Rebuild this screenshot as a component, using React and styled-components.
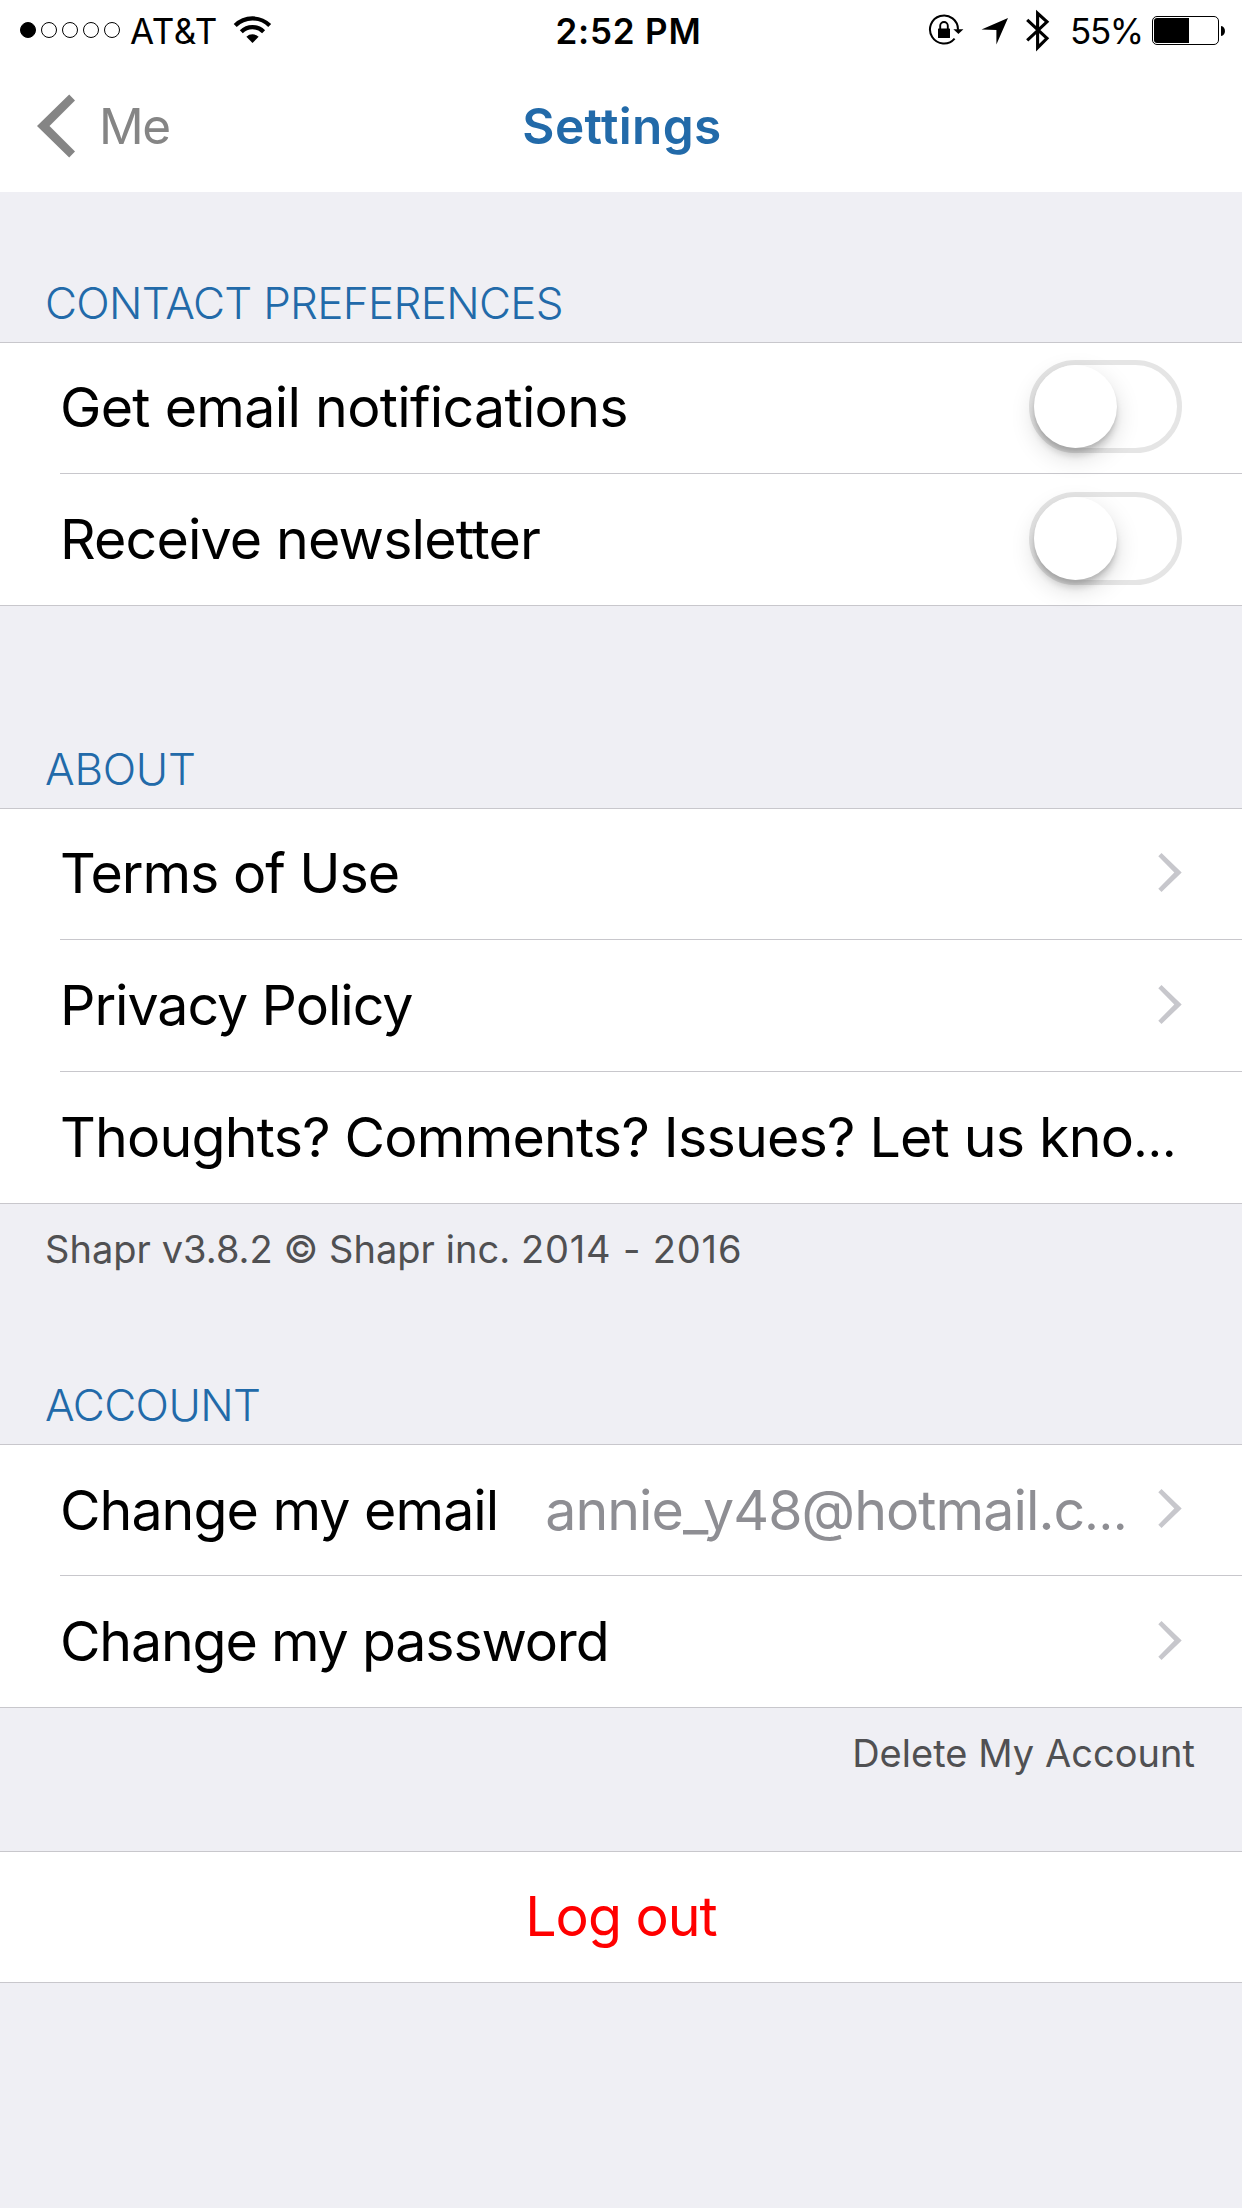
import React from "react";
import styled, { createGlobalStyle } from "styled-components";

const GlobalStyle = createGlobalStyle`
  *, *::before, *::after { box-sizing: border-box; }
  body {
    margin: 0;
    background: #efeff4;
    color: #000;
    font-family: Inter, "Liberation Sans", sans-serif;
  }
`;

const Screen = styled.main`
  display: flex;
  flex-direction: column;
  width: 1242px;
  min-height: 2208px;
  background: #efeff4;
`;

const TopBar = styled.header`
  height: 192px;
  background: #fff;
`;

const StatusBar = styled.div`
  display: grid;
  grid-template-columns: 1fr auto 1fr;
  height: 62px;
  font-size: 35px;
  line-height: 62px;
  white-space: nowrap;
`;

const StatusLeft = styled.div`
  display: flex;
  padding-left: 20px;
`;

const StatusRight = styled.div`
  display: flex;
  justify-content: flex-end;
  padding-right: 16px;
`;

const SignalDots = styled.div`
  display: flex;
  align-items: center;
  gap: 5px;
  height: 60px;
  margin-right: 10px;
`;

const Dot = styled.span`
  width: 16px;
  height: 16px;
  border: 1px solid #000;
  border-radius: 50%;
  background: ${(p) => (p.$filled ? "#000" : "transparent")};
`;

const Carrier = styled.span`
  width: 100px;
  letter-spacing: 0.52px;
`;

const Clock = styled.time`
  padding-left: 15px;
  font-weight: 600;
  letter-spacing: 0.8px;
`;

const BatteryLevel = styled.span`
  width: 82px;
  letter-spacing: -1.4px;
`;

const Glyph = styled.svg`
  display: block;
  flex: none;
`;

const NavBar = styled.nav`
  display: grid;
  grid-template-columns: 1fr auto 1fr;
  height: 128px;
  line-height: 128px;
  font-size: 49.5px;
`;

const BackLink = styled.a`
  display: flex;
  align-items: center;
  gap: 23px;
  padding-left: 37px;
  color: #858585;
  letter-spacing: -1.4px;
`;

const Title = styled.h1`
  margin: 0;
  padding-left: 2px;
  color: #226aa9;
  font-size: inherit;
  font-weight: 600;
  letter-spacing: 0.38px;
`;

const SectionHeader = styled.h2`
  display: flex;
  align-items: flex-end;
  height: ${(p) => p.$height}px;
  margin: 0;
  padding: 0 45px 12px;
  color: #226aa9;
  font-size: 44px;
  font-weight: 300;
  line-height: 54px;
  letter-spacing: ${(p) => p.$tracking}px;
`;

const Group = styled.div`
  padding-left: 60px;
  border-top: 1px solid #c8c7cc;
  border-bottom: 1px solid #c8c7cc;
  background: #fff;
`;

const Row = styled.div`
  display: flex;
  align-items: center;
  height: 132px;
  padding: 0 60px 1px 0;
  border-top: 1px solid #c8c7cc;
  font-size: 55.5px;
  line-height: 70px;
  white-space: nowrap;

  &:first-child {
    height: 130px;
    padding-bottom: 2px;
    border-top: 0;
  }
`;

const Label = styled.span`
  padding-top: ${(p) => p.$drop || 0}px;
  letter-spacing: ${(p) => p.$tracking}px;
`;

const Value = styled(Label)`
  margin-left: auto;
  margin-right: 31.5px;
  color: #8e8e93;
`;

const Ellipsis = styled.span`
  font-size: 50px;
  line-height: 0;
`;

const Disclosure = styled(Glyph)`
  margin: 0 0 1px ${(p) => (p.$afterValue ? "0" : "auto")};
`;

const Switch = styled.span`
  flex: none;
  width: 153px;
  height: 93px;
  margin: 0 0 1px auto;
  border: 5px solid #e5e5e5;
  border-radius: 47px;
`;

const Knob = styled.span`
  display: block;
  width: 83px;
  height: 83px;
  border-radius: 50%;
  background: #fff;
  box-shadow: 0 9px 24px rgba(0, 0, 0, 0.15), 0 3px 3px rgba(0, 0, 0, 0.08),
    0 8px 6px rgba(0, 0, 0, 0.12);
`;

const FootNote = styled.p`
  height: 90px;
  margin: 0;
  padding: 0 47px 0 45px;
  color: #505052;
  font-size: 38px;
  line-height: 90px;
  text-align: ${(p) => p.$align || "left"};
  letter-spacing: 0.04px;
`;

const Years = styled.span`
  letter-spacing: 0.84px;
`;

const LogoutGroup = styled.div`
  display: flex;
  align-items: center;
  justify-content: center;
  height: 132px;
  margin-top: 53px;
  padding-bottom: 2px;
  border-top: 1px solid #c8c7cc;
  border-bottom: 1px solid #c8c7cc;
  background: #fff;
  color: #f00;
  font-size: 55.5px;
  line-height: 70px;
  letter-spacing: -1px;
`;

const WifiIcon = () => (
  <Glyph width="45" height="62" viewBox="230 0 45 62" fill="none" stroke="#000" strokeWidth="4.2">
    <path d="M235.2 25.6a24.4 24.4 0 0 1 34.5 0" />
    <path d="M241.3 31.7a15.8 15.8 0 0 1 22.3 0" />
    <path d="M252.5 43l-6.1-6.2a8.7 8.7 0 0 1 12.2 0z" fill="#000" stroke="none" />
  </Glyph>
);

const RotationLockIcon = () => (
  <Glyph width="53" height="62" viewBox="928 0 53 62">
    <path d="M958 29.7A14 14 0 1 0 954.6 38.6" fill="none" stroke="#000" strokeWidth="2" />
    <path d="M953.4 29.2h10l-5 4.9z" />
    <rect x="938" y="28.5" width="12" height="9.5" rx="0.6" />
    <path d="M940.2 29v-3.2a3.8 3.8 0 0 1 7.6 0V29" fill="none" stroke="#000" strokeWidth="1.9" />
  </Glyph>
);

const LocationIcon = () => (
  <Glyph width="44" height="62" viewBox="981 0 44 62">
    <path d="M981.5 29.6L1008 18l-11.6 26.6V30z" />
  </Glyph>
);

const BluetoothIcon = () => (
  <Glyph width="45" height="62" viewBox="1025 0 45 62" fill="none" stroke="#000" strokeWidth="3.1">
    <path d="M1027.2 19.8L1047 38.4l-9.4 9.3V13.3l9.4 8.5-19.8 18.6" />
  </Glyph>
);

const BatteryIcon = () => (
  <Glyph width="74" height="62" viewBox="1152 0 74 62">
    <rect x="1152.5" y="16.5" width="66" height="28" rx="4.5" fill="none" stroke="#000" />
    <path d="M1157 18h32v25h-32a3 3 0 0 1-3-3V21a3 3 0 0 1 3-3z" />
    <path d="M1221 26c5.3 0.5 5.3 9.5 0 10z" />
  </Glyph>
);

const BackIcon = () => (
  <Glyph width="39" height="64" viewBox="37 94.5 39 64" fill="#858585">
    <path d="M37 126.5L69.2 95l5.8 6-25.5 25.5L75 152l-5.8 6z" />
  </Glyph>
);

const Chevron = ({ afterValue }) => (
  <Disclosure $afterValue={afterValue} width="24" height="39" viewBox="0 0 24 39" fill="#c7c7cc">
    <path d="M3.5 0L23.7 19.5 3.5 39 0.3 35.7 16.3 19.5 0.3 3.3z" />
  </Disclosure>
);

const Toggle = () => (
  <Switch role="switch" aria-checked="false">
    <Knob />
  </Switch>
);

export default function App() {
  return (
    <>
      <GlobalStyle />
      <Screen>
        <TopBar>
          <StatusBar>
            <StatusLeft>
              <SignalDots>
                {[1, 0, 0, 0, 0].map((on, i) => (
                  <Dot key={i} $filled={on === 1} />
                ))}
              </SignalDots>
              <Carrier>AT&amp;T</Carrier>
              <WifiIcon />
            </StatusLeft>
            <Clock>2:52 PM</Clock>
            <StatusRight>
              <RotationLockIcon />
              <LocationIcon />
              <BluetoothIcon />
              <BatteryLevel>55%</BatteryLevel>
              <BatteryIcon />
            </StatusRight>
          </StatusBar>
          <NavBar>
            <BackLink>
              <BackIcon />
              Me
            </BackLink>
            <Title>Settings</Title>
          </NavBar>
        </TopBar>

        <SectionHeader $height={150} $tracking={-0.7}>CONTACT PREFERENCES</SectionHeader>
        <Group>
          <Row>
            <Label $tracking={-0.71}>Get email notifications</Label>
            <Toggle />
          </Row>
          <Row>
            <Label $tracking={-0.84}>Receive newsletter</Label>
            <Toggle />
          </Row>
        </Group>

        <SectionHeader $height={202} $tracking={-0.25}>ABOUT</SectionHeader>
        <Group>
          <Row>
            <Label $tracking={-1.04}>Terms of Use</Label>
            <Chevron />
          </Row>
          <Row>
            <Label $tracking={-1.07}>Privacy Policy</Label>
            <Chevron />
          </Row>
          <Row>
            <Label $tracking={-0.79}>
              Thoughts? Comments? Issues? Let us kno<Ellipsis>…</Ellipsis>
            </Label>
          </Row>
        </Group>
        <FootNote>
          Shapr v3.8.2 © Shapr inc. <Years>2014 - 2016</Years>
        </FootNote>

        <SectionHeader $height={150} $tracking={-0.6}>ACCOUNT</SectionHeader>
        <Group>
          <Row>
            <Label $tracking={-0.98} $drop={2}>Change my email</Label>
            <Value $tracking={-0.95} $drop={2}>
              annie_y48@hotmail.c<Ellipsis>…</Ellipsis>
            </Value>
            <Chevron afterValue />
          </Row>
          <Row>
            <Label $tracking={-1.19}>Change my password</Label>
            <Chevron />
          </Row>
        </Group>
        <FootNote $align="right">Delete My Account</FootNote>

        <LogoutGroup>Log out</LogoutGroup>
      </Screen>
    </>
  );
}
